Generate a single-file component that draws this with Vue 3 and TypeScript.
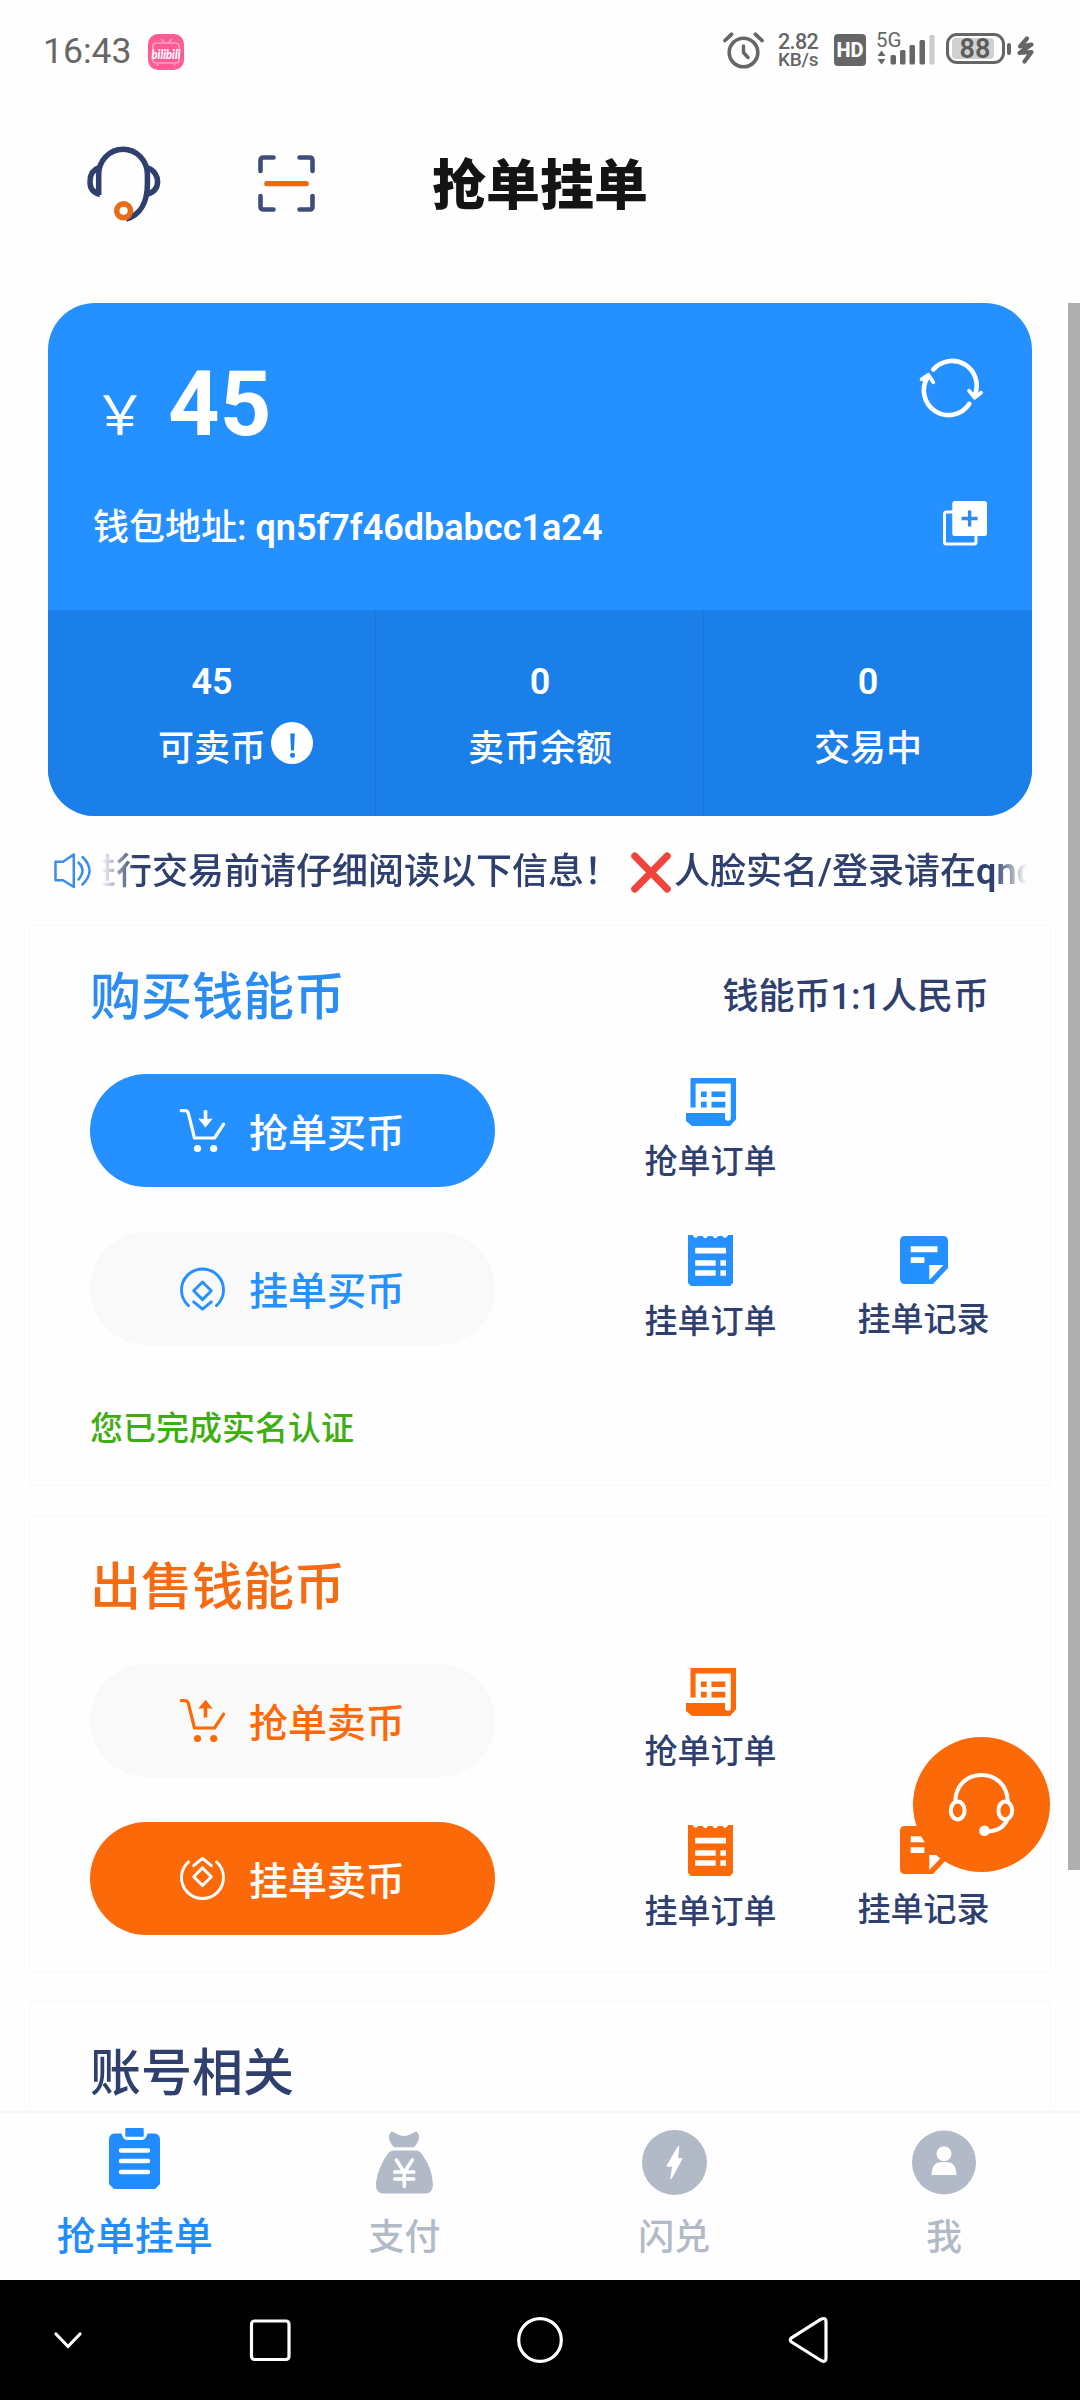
<script setup lang="ts">
interface Action {
  kind: 'cart' | 'coin'
  text: string
  filled: boolean
  links: { icon: 'order' | 'receipt' | 'note'; text: string }[]
}
interface Panel {
  title: string
  theme: 'buy' | 'sell'
  side?: string
  notice?: string
  actions: Action[]
}

const stats = [
  { value: '45', label: '可卖币', hint: true },
  { value: '0', label: '卖币余额', hint: false },
  { value: '0', label: '交易中', hint: false },
]

const panels: Panel[] = [
  {
    title: '购买钱能币',
    theme: 'buy',
    side: '钱能币1:1人民币',
    notice: '您已完成实名认证',
    actions: [
      { kind: 'cart', text: '抢单买币', filled: true, links: [{ icon: 'order', text: '抢单订单' }] },
      {
        kind: 'coin',
        text: '挂单买币',
        filled: false,
        links: [
          { icon: 'receipt', text: '挂单订单' },
          { icon: 'note', text: '挂单记录' },
        ],
      },
    ],
  },
  {
    title: '出售钱能币',
    theme: 'sell',
    actions: [
      { kind: 'cart', text: '抢单卖币', filled: false, links: [{ icon: 'order', text: '抢单订单' }] },
      {
        kind: 'coin',
        text: '挂单卖币',
        filled: true,
        links: [
          { icon: 'receipt', text: '挂单订单' },
          { icon: 'note', text: '挂单记录' },
        ],
      },
    ],
  },
]
</script>

<template>
  <div class="screen">
    <header class="status">
      <span class="clock">16:43</span>
      <svg class="bili" width="36" height="36" viewBox="0 0 36 36">
        <rect width="36" height="36" rx="10" fill="#fb5c94" />
        <path d="M13 5l4 4M24 5l-4 4M9 30l1 2M27 30l-1 2" stroke="#fd9dc0" stroke-width="1.6" />
        <rect x="5" y="9" width="26" height="20" rx="3" fill="none" stroke="#fd9dc0" stroke-width="1.6" />
        <text x="18" y="24.500" text-anchor="middle" textLength="29" lengthAdjust="spacingAndGlyphs" class="bili-text">bilibili</text>
      </svg>
      <div class="status-right">
        <svg class="alarm" width="41" height="37" viewBox="0 0 41 37" fill="none" stroke="#666" stroke-linecap="round">
          <circle cx="20.500" cy="20.500" r="14.300" stroke-width="3.600" />
          <path d="M20.500 14v6.500l4.500 5" stroke-width="3.400" />
          <path d="M2 8.500L8.500 2.300M39 8.500L32.500 2.300" stroke-width="3.800" />
        </svg>
        <div class="speed"><span>2.82</span><span>KB/s</span></div>
        <div class="hd">HD</div>
        <div class="signal">
          <span class="fiveg">5G</span>
          <svg width="58" height="34" viewBox="0 0 58 34" fill="#666">
            <path d="M.5 24L4.500 18.500 8.500 24zM.5 27L4.500 32.500 8.500 27z" />
            <rect x="13.500" y="23" width="5.500" height="9.500" rx="1.500" />
            <rect x="23" y="18" width="5.500" height="14.500" rx="1.500" />
            <rect x="32.500" y="13" width="5.500" height="19.500" rx="1.500" />
            <rect x="42.500" y="8" width="5.500" height="24.500" rx="1.500" />
            <rect x="52.300" y="3" width="5.300" height="29.500" rx="1.500" fill="#ccc" />
          </svg>
        </div>
        <div class="battery"><span>88</span></div>
        <i class="nub"></i>
        <svg class="bolt" width="17" height="28" viewBox="0 0 17 28">
          <path d="M10 2.500L3 10.500 14.500 8.500 2.500 17 14.500 16 7.500 25.500" fill="none" stroke="#666" stroke-width="4.200" stroke-linejoin="round" stroke-linecap="round" />
        </svg>
      </div>
    </header>

    <div class="top">
      <svg class="headset" width="74" height="76" viewBox="0 0 74 76" fill="none" stroke="#2f406e" stroke-width="5.500">
        <path d="M11.700 49V28.500A24.350 25.300 0 0 1 60.400 28.500V38C60.400 55 54 69 39 73" />
        <path d="M11.500 22C5 24 3 30 3 36c0 7 4 11 10 12.500M61 22c6 2 9.600 8 9.600 13.500S67.500 46 60.500 48" />
        <circle cx="36.600" cy="64.800" r="6.900" stroke="#ea6a16" stroke-width="5.600" fill="#fefefe" />
      </svg>
      <svg class="scan" width="57" height="57" viewBox="0 0 57 57" fill="none" stroke="#3f4d7a" stroke-width="4.600" stroke-linecap="round">
        <path d="M2.500 16V5.500q0-3 3-3H15.500M41.500 2.500H51.500q3 0 3 3V16M54.500 41v10.500q0 3-3 3H41.500M15.500 54.500H5.500q-3 0-3-3V41" />
        <path d="M8.800 28.700h39.400" stroke="#ea6a16" stroke-width="5.200" />
      </svg>
      <h1>抢单挂单</h1>
    </div>

    <main class="content">
      <section class="wallet">
        <div class="wallet-main">
          <div class="balance">
            <span class="yen">&#xFFE5;</span><span class="amount">45</span>
            <svg class="refresh" width="66" height="60" viewBox="0 0 66 60" fill="none" stroke="#fff" stroke-width="4.600" stroke-linecap="round" stroke-linejoin="round">
              <path d="M15.300 12.400A24.700 24.700 0 0 1 56.800 38M51.300 46.800A24.700 24.700 0 0 1 9.800 20" />
              <path d="M3.600 22.300L10.300 17.800 15.300 25.300M51 33.700L56.500 40.700 63 35.700" stroke-width="3.800" />
            </svg>
          </div>
          <div class="address">
            <span>钱包地址: <b>qn5f7f46dbabcc1a24</b></span>
            <svg width="44" height="45" viewBox="0 0 44 45">
              <rect x="1.500" y="11" width="31.500" height="32" rx="2" fill="none" stroke="#fff" stroke-width="3" />
              <rect x="9.300" y="0" width="34.700" height="35" rx="2.500" fill="#fff" />
              <path d="M26.600 9.500v16M18.600 17.500h16" stroke="#2b8bf0" stroke-width="3.400" />
            </svg>
          </div>
        </div>
        <div class="stats">
          <div v-for="s in stats" :key="s.label" class="stat">
            <b>{{ s.value }}</b>
            <span class="stat-label">{{ s.label }}
              <svg v-if="s.hint" class="hint" width="42" height="42" viewBox="0 0 42 42">
                <circle cx="21" cy="21" r="21" fill="#fff" />
                <path d="M19.200 11.500h4.600l-.8 17h-3z" fill="#1b7fea" />
                <circle cx="21.500" cy="33.200" r="2.500" fill="#1b7fea" />
              </svg>
            </span>
          </div>
        </div>
      </section>

      <div class="notice-bar">
        <svg width="37" height="36" viewBox="0 0 37 36" fill="none" stroke="#3a8eea" stroke-width="2.500" stroke-linecap="round">
          <path d="M1.500 8.800H9L19.800 1.500V34L9 27.300H1.500z" stroke-linejoin="round" />
          <path d="M24.500 9.500q8 7.500 0 17M28.500 4q14 13.500 0 27.500" />
        </svg>
        <div class="marquee">
          <div class="marquee-text">
            <span>进行交易前请仔细阅读以下信息！</span>
            <svg width="40" height="41" viewBox="0 0 40 41">
              <path d="M3.800 4L36.200 37M36.200 4L3.800 37" stroke="#f0443c" stroke-width="7.200" stroke-linecap="round" />
            </svg>
            <span>人脸实名/登录请在<b>qnc</b></span>
          </div>
        </div>
      </div>

      <section v-for="p in panels" :key="p.title" class="panel" :class="p.theme">
        <div class="panel-head">
          <h2>{{ p.title }}</h2>
          <span v-if="p.side">{{ p.side }}</span>
        </div>
        <div v-for="a in p.actions" :key="a.text" class="row">
          <div class="btn" :class="{ filled: a.filled }">
            <svg v-if="a.kind === 'cart'" width="45" height="44" viewBox="0 0 45 44" fill="none" stroke="currentColor" stroke-width="3.200" stroke-linecap="round" stroke-linejoin="round">
              <path d="M1.200 1.600H5q2.500 0 3.300 2.600L14.500 29H34.500L43.600 15.200" />
              <g fill="currentColor" stroke="none">
                <circle cx="17.500" cy="39.500" r="3.600" />
                <circle cx="33.700" cy="39.500" r="3.600" />
                <path v-if="p.theme === 'buy'" d="M23.700 1.200h3.600V10l5.500-.5L25.500 18.500 18.200 9.500 23.700 10z" />
                <path v-else d="M23.700 18.500h3.600V9.300l5.500.5L25.500.8 18.200 9.800 23.700 9.300z" />
              </g>
            </svg>
            <svg v-else width="45" height="44" viewBox="0 0 45 44" fill="none" stroke="currentColor" stroke-width="2.900" stroke-linecap="round" stroke-linejoin="round">
              <g :transform="p.theme === 'sell' ? 'matrix(1 0 0 -1 0 43.500)' : undefined">
                <path d="M8.500 38.600A21 21 0 1 1 36.500 38.600" />
                <path d="M22.500 15l8.800 8.800-8.800 8.800-8.800-8.800z" />
                <path d="M13.700 34.800l8.800 7.400 8.800-7.400" />
              </g>
            </svg>
            <span>{{ a.text }}</span>
          </div>
          <div class="links">
            <div v-for="l in a.links" :key="l.text" class="link" :class="l.icon">
              <svg v-if="l.icon === 'order'" width="50" height="48" viewBox="0 0 50 48" fill="currentColor">
                <path d="M4.500 0H50V41.500L44 48H6L0 43V35H39V40Q39 42.800 42 42.800 44.800 42.800 44.800 40V5.400H9.600V29.500H4.500z" />
                <path d="M15 13.400h5.700v5.700H15zM25.500 13.400h13.800v5.700H25.500zM15 23.800h5.700v5.700H15zM25.500 23.800h13.800v5.700H25.500z" />
              </svg>
              <svg v-else-if="l.icon === 'receipt'" width="45" height="51" viewBox="0 0 45 51" fill="currentColor">
                <path d="M0 0H4.500Q7.300 5.500 10.100 1H14.500Q17.300 5.500 20.100 1H24.500Q27.300 5.500 30.100 1H34.500Q37.300 5.500 40.100 0H45V48L42 51H3L0 48z" />
                <path fill="#fefefe" d="M7.200 12.800H38v5.600H7.200zM7.200 25.200h20.500v5.600H7.200zM32.400 25.200H38v5.600h-5.600zM7.200 35.200h20.500v5.600H7.200zM32.400 35.200H38v5.600h-5.600z" />
              </svg>
              <svg v-else width="48" height="48" viewBox="0 0 48 48" fill="currentColor">
                <path d="M5 0H43q5 0 5 5V32L33 48H5q-5 0-5-5V5q0-5 5-5z" />
                <path fill="#fefefe" d="M10.700 10.300h26.800v6H10.700zM10.700 21.300h13.700v5.600H10.700zM29.300 29H43.600L29.300 44z" />
              </svg>
              <span>{{ l.text }}</span>
            </div>
          </div>
        </div>
        <p v-if="p.notice" class="verified">{{ p.notice }}</p>
      </section>

      <section class="panel account">
        <div class="panel-head"><h2>账号相关</h2></div>
      </section>

      <i class="scrollbar"></i>
      <div class="fab">
        <svg width="65" height="64" viewBox="0 0 65 64" fill="none" stroke="#fff" stroke-width="4" stroke-linecap="round">
          <path d="M6.300 27.500C7 12 18 2 32.500 2S58 12 58.700 27.500" />
          <ellipse cx="8.700" cy="37.500" rx="6.900" ry="8.900" />
          <ellipse cx="56.300" cy="37.500" rx="6.900" ry="8.900" />
          <path d="M58 47.500Q52 58.500 38 58.500" />
          <circle cx="35.500" cy="57.800" r="5.300" fill="#fff" stroke="none" />
        </svg>
      </div>
    </main>

    <nav class="tabs">
      <div class="tab active">
        <svg width="51" height="61" viewBox="0 0 51 61">
          <path d="M5 5.500H12.500C14 11.500 17 12 18 12H33c1 0 4-.5 5.500-6.500H46q5 1 5 6V56l-5 5H5l-5-5V11.500q0-5 5-6z" fill="#208cff" />
          <rect x="16.300" y="0" width="18.400" height="8.700" rx="1" fill="#208cff" />
          <path d="M12 22.400h27M12 33.100h27M12 44h27" stroke="#fff" stroke-width="4.500" stroke-linecap="round" />
        </svg>
        <span>抢单挂单</span>
      </div>
      <div class="tab">
        <svg width="57" height="62" viewBox="0 0 57 62">
          <g fill="#b3bac7">
            <path d="M16 0Q24 4.500 28 4.500T40 0Q43 1 43 6q-.5 5-5 9.700H18Q13.300 11 13 6q0-5 3-6z" />
            <path d="M18 19H40q3.500 0 6.500 4.500Q56 36 57 53q-.5 8-6 9H6Q.5 61 0 55V51Q2 36 11 23.500 13.500 19 18 19z" />
          </g>
          <path d="M20.300 28.500l8 12.500 8-12.500M28.300 41v14M18.800 40.500h19M18.800 47.500h19" fill="none" stroke="#fff" stroke-width="3.500" stroke-linecap="round" stroke-linejoin="round" />
        </svg>
        <span>支付</span>
      </div>
      <div class="tab">
        <svg width="65" height="65" viewBox="0 0 65 65">
          <circle cx="32.500" cy="32.500" r="32.500" fill="#b3bac7" />
          <path d="M36.500 16.700L35.300 28.800H39.600L29 48.300 31 36H25.300z" fill="#fff" stroke="#fff" stroke-width="1.500" stroke-linejoin="round" />
        </svg>
        <span>闪兑</span>
      </div>
      <div class="tab">
        <svg width="64" height="64" viewBox="0 0 64 64">
          <circle cx="32" cy="32" r="32" fill="#b3bac7" />
          <circle cx="32" cy="23.300" r="7.500" fill="#fff" />
          <path d="M19.600 44.600Q19.600 31.800 29 31.800h6q9.400 0 9.400 12.800z" fill="#fff" />
        </svg>
        <span>我</span>
      </div>
    </nav>

    <footer class="sysnav">
      <svg width="1080" height="120" viewBox="0 0 1080 120" fill="none" stroke="#fff" stroke-width="3.200" stroke-linejoin="round" stroke-linecap="round">
        <path d="M56 54l12 12.500L80 54" />
        <rect x="251.500" y="41" width="37.500" height="38.500" rx="3" />
        <circle cx="540" cy="60" r="21.300" />
        <path d="M791.500 57.800L821 39.200q5-2.200 5 2.500V78q0 5-5 2.500L791.500 62q-2.500-2.100 0-4.200z" />
      </svg>
    </footer>
  </div>
</template>

<style>
body {
  margin: 0;
  background: #fefefe;
}
</style>

<style scoped>
.screen {
  width: 1080px;
  height: 2400px;
  overflow: hidden;
  display: flex;
  flex-direction: column;
  background: #fefefe;
  color: #2f406e;
  font-family: Roboto, 'Noto Sans CJK SC', sans-serif;
  font-weight: 500;
}
svg {
  display: block;
  flex: none;
  overflow: visible;
}
b {
  font-weight: 600;
}
.status {
  height: 100px;
  display: flex;
  align-items: flex-start;
  color: #666;
  box-sizing: border-box;
  padding: 32px 46px 0 43px;
}
.clock {
  font-size: 35.500px;
  line-height: 38px;
  font-weight: 400;
  width: 105px;
  white-space: nowrap;
}
.bili {
  margin-top: 2px;
}
.bili-text {
  font: italic 900 14px Lato, sans-serif;
  fill: #fff;
}
.status-right {
  margin-left: auto;
  display: flex;
  align-items: flex-start;
}
.speed {
  margin-left: 14px;
  width: 41px;
  display: flex;
  flex-direction: column;
  font-size: 21.500px;
  line-height: 19px;
  letter-spacing: -0.6px;
  white-space: nowrap;
  font-weight: 500;
}
.speed span:last-child {
  font-size: 19px;
  line-height: 17px;
  letter-spacing: -0.2px;
}
.hd {
  margin: 2px 0 0 15px;
  width: 32px;
  height: 32px;
  border-radius: 4px;
  background: #666;
  color: #fefefe;
  font-size: 20px;
  font-weight: 800;
  line-height: 33px;
  text-align: center;
}
.signal {
  position: relative;
  margin-left: 11px;
}
.fiveg {
  position: absolute;
  left: -1px;
  top: -2px;
  font-size: 20.500px;
  line-height: 20px;
  font-weight: 400;
}
.battery {
  margin: 1px 0 0 11px;
  width: 59px;
  height: 31px;
  box-sizing: border-box;
  border: 3px solid #666;
  border-radius: 11px;
  padding: 2px 8px 2px 3px;
}
.battery span {
  display: block;
  height: 21px;
  border-radius: 4px;
  background: #d0d0d0;
  font-size: 27px;
  line-height: 23px;
  font-weight: 600;
  text-align: center;
  text-indent: 4px;
  color: #5c5c5c;
}
.nub {
  width: 4px;
  height: 12px;
  margin: 11px 6px 0 2px;
  border-radius: 2px;
  background: #666;
}
.bolt {
  margin-top: 4px;
}
.top {
  height: 203px;
  display: flex;
  align-items: flex-start;
  padding-left: 87px;
}
.headset {
  margin-top: 46px;
}
.scan {
  margin: 55px 117px 0 97px;
}
h1 {
  margin: 54.500px 0 0;
  font-size: 54px;
  line-height: 64px;
  font-weight: 900;
  color: #141414;
}
.content {
  position: relative;
  height: 1808px;
  overflow: hidden;
}
.wallet {
  margin: 0 48px;
  border-radius: 47px;
  overflow: hidden;
  background: #2590ff;
  color: #fff;
}
.wallet-main {
  height: 307px;
  box-sizing: border-box;
  padding: 52px 45px 0 45px;
}
.balance {
  display: flex;
  align-items: baseline;
  height: 100px;
  line-height: 100px;
}
.yen {
  font-family: 'Noto Sans CJK SC', sans-serif;
  font-size: 54px;
  font-weight: 400;
  width: 75px;
}
.amount {
  font-size: 90px;
  font-weight: 700;
}
.refresh {
  align-self: flex-start;
  margin: 2px 3px 0 auto;
}
.address {
  margin-top: 46px;
  display: flex;
  justify-content: space-between;
  font-size: 36px;
  line-height: 40px;
}
.address span {
  padding-top: 7px;
}
.stats {
  display: flex;
  height: 206px;
  background: #1b7fea;
}
.stat {
  flex: 1;
  box-sizing: border-box;
  padding-top: 52px;
  display: flex;
  flex-direction: column;
  align-items: center;
  font-size: 36px;
  line-height: 40px;
  box-shadow: inset -1px 0 #1775dc;
}
.stat:last-child {
  box-shadow: none;
}
.stat-label {
  position: relative;
  margin-top: 27px;
}
.hint {
  position: absolute;
  left: 113px;
  top: -7px;
}
.notice-bar {
  height: 109px;
  display: flex;
  align-items: center;
  padding-left: 54px;
}
.marquee {
  margin: 3px 0 0 10px;
  width: 926px;
  overflow: hidden;
  -webkit-mask-image: linear-gradient(90deg, transparent, #000 34px, #000 892px, transparent);
  mask-image: linear-gradient(90deg, transparent, #000 34px, #000 892px, transparent);
}
.marquee-text {
  margin-left: -21px;
  display: flex;
  align-items: center;
  font-size: 36px;
  line-height: 50px;
  white-space: nowrap;
}
.marquee-text svg {
  margin: 0 3px 0 11px;
}
.panel {
  margin: 0 29px 29px;
  height: 457px;
  box-sizing: border-box;
  border: 1px solid #f6f8f9;
  padding: 0 0 0 60px;
}
.panel.buy {
  height: 561px;
  color: #2590ff;
}
.panel.sell {
  color: #fb6909;
}
.panel-head {
  height: 148px;
  box-sizing: border-box;
  padding: 42px 61px 0 0;
  display: flex;
  justify-content: space-between;
  font-size: 36px;
  line-height: 58px;
  color: #2f406e;
}
h2 {
  margin: 0;
  font-size: 51px;
  line-height: 60px;
  font-weight: 500;
}
.buy h2 {
  color: #2b8df3;
}
.sell h2 {
  color: #f56b12;
}
.row {
  display: flex;
  height: 113px;
}
.row + .row {
  margin-top: 45px;
}
.btn {
  width: 405px;
  box-sizing: border-box;
  padding-left: 90px;
  border-radius: 57px;
  display: flex;
  align-items: center;
  gap: 24px;
  background: #f9f9f9;
  font-family: 'Noto Sans CJK SC', sans-serif;
  font-size: 39px;
  line-height: 50px;
}
.btn span {
  margin-top: -2px;
}
.btn.filled {
  color: #fff;
}
.buy .btn.filled {
  background: #2590ff;
}
.sell .btn.filled {
  background: #fb6909;
}
.links {
  display: flex;
  margin-left: 109px;
}
.link {
  width: 213px;
  padding-top: 4px;
  display: flex;
  flex-direction: column;
  align-items: center;
}
.link.receipt {
  padding-top: 3px;
}
.link span {
  margin-top: 16px;
  font-size: 33px;
  line-height: 40px;
  color: #2f406e;
}
.verified {
  margin: 64px 0 0;
  font-size: 33px;
  line-height: 40px;
  color: #3fae12;
}
.scrollbar {
  position: absolute;
  right: 0;
  top: 0;
  width: 12px;
  height: 1567px;
  background: #afafaf;
}
.fab {
  position: absolute;
  left: 913px;
  top: 1434px;
  width: 137px;
  height: 135px;
  border-radius: 50%;
  background: #fb6909;
  display: flex;
  align-items: center;
  justify-content: center;
}
.tabs {
  height: 169px;
  box-sizing: border-box;
  border-top: 2px solid #f6f7f8;
  background: #fefefe;
  display: flex;
}
.tab {
  width: 269.700px;
  padding-top: 17px;
  display: flex;
  flex-direction: column;
  align-items: center;
  font-size: 36px;
  color: #b3bac7;
}
.tab svg {
  height: 65px;
}
.tab span {
  margin-top: 21px;
  line-height: 44px;
}
.tab.active {
  padding-top: 15px;
  font-size: 39px;
  color: #208cff;
}
.tab.active svg {
  height: 61px;
}
.tab.active span {
  margin-top: 26px;
}
.sysnav {
  height: 120px;
  background: #000;
}
</style>
